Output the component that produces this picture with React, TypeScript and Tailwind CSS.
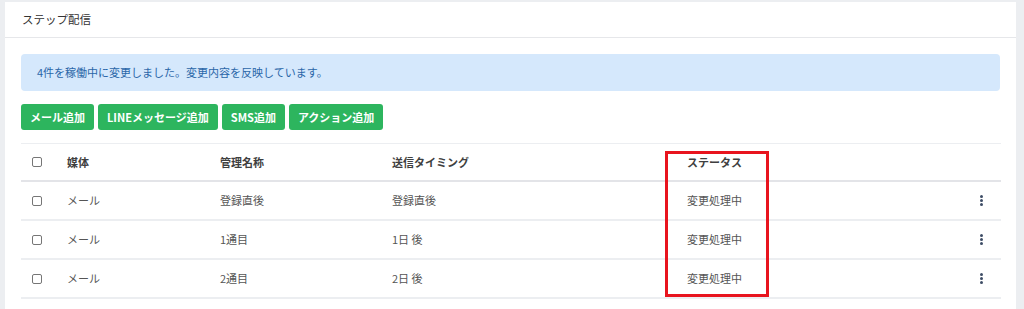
const font = { fontFamily: '"Noto Sans CJK JP", "Noto Sans", sans-serif' }

const rows = [
  { media: 'メール', name: '登録直後', timing: '登録直後', status: '変更処理中' },
  { media: 'メール', name: '1通目', timing: '1日 後', status: '変更処理中' },
  { media: 'メール', name: '2通目', timing: '2日 後', status: '変更処理中' },
]

function Check() {
  return <span className="block w-[10px] h-[10px] border border-[#767676] rounded-[2px] bg-white ml-[11px]" />
}

function Kebab() {
  return (
    <span className="flex flex-col items-center gap-[1px]">
      <span className="w-[3px] h-[3px] rounded-full bg-[#3e4d66]" />
      <span className="w-[3px] h-[3px] rounded-full bg-[#3e4d66]" />
      <span className="w-[3px] h-[3px] rounded-full bg-[#3e4d66]" />
    </span>
  )
}

export default function App() {
  const cols = 'grid grid-cols-[46px_153px_172px_295px_1fr_40px] items-center'
  return (
    <div className="w-[1024px] h-[309px] bg-[#eceef1] pl-[5px] pt-[2px] overflow-hidden" style={font}>
      <div className="w-[1011px] h-[320px] bg-white">
        <div className="h-[36px] border-b border-[#e6e7ea] flex items-center pl-[17px] text-[11.5px] text-[#333]">
          ステップ配信
        </div>
        <div className="px-[16px] pt-[16px]">
          <div className="h-[37px] rounded-[4px] bg-[#d5e8fc] flex items-center pl-[16px] text-[11px] text-[#2a66a8]">
            4件を稼働中に変更しました。変更内容を反映しています。
          </div>
          <div className="flex gap-[4px] mt-[13px]">
            {['メール追加', 'LINEメッセージ追加', 'SMS追加', 'アクション追加'].map((b) => (
              <span key={b} className="h-[26px] px-[9px] flex items-center rounded-[3px] bg-[#2db55e] text-white text-[11px] font-bold">
                {b}
              </span>
            ))}
          </div>
          <div className="relative mt-[13px] w-[980px] border-t border-[#eceef1]">
            <div className={`${cols} h-[38px] border-b-2 border-[#e3e4e8] text-[11px] font-bold text-[#3f3f3f]`}>
              <Check />
              <span>媒体</span>
              <span>管理名称</span>
              <span>送信タイミング</span>
              <span>ステータス</span>
              <span />
            </div>
            {rows.map((r, i) => (
              <div key={i} className={`${cols} h-[39px] border-b-2 border-[#eceef1] text-[11px] text-[#555]`}>
                <Check />
                <span>{r.media}</span>
                <span>{r.name}</span>
                <span>{r.timing}</span>
                <span>{r.status}</span>
                <span className="flex justify-center">
                  <Kebab />
                </span>
              </div>
            ))}
            <div className="absolute left-[644px] top-[7px] w-[104px] h-[146px] border-[3px] border-[#e8141e]" />
          </div>
        </div>
      </div>
    </div>
  )
}
